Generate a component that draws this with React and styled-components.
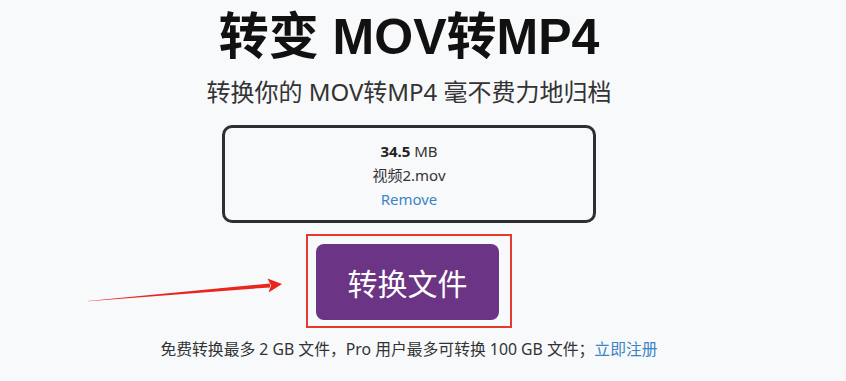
import React from "react";
import styled, { createGlobalStyle } from "styled-components";

const GlobalStyle = createGlobalStyle`
  html, body {
    margin: 0;
    padding: 0;
    background: #f8f9fb;
  }
  body {
    font-family: "Noto Sans", "Noto Sans CJK SC", sans-serif;
    color: #333;
  }
`;

const Page = styled.main`
  position: relative;
  width: 818px;
  height: 381px;
  display: flex;
  flex-direction: column;
  align-items: center;
  padding-top: 7px;
  box-sizing: border-box;
`;

const Title = styled.h1`
  margin: 0;
  font-family: "Liberation Sans", "Noto Sans CJK SC", sans-serif;
  font-size: 50px;
  line-height: 60px;
  font-weight: 700;
  color: #111;
`;

const SubTitle = styled.p`
  margin: 9px 0 0;
  font-size: 24px;
  line-height: 32px;
  color: #333;
`;

const FileCard = styled.div`
  margin-top: 17px;
  width: 374px;
  box-sizing: border-box;
  border: 3px solid #2e2f31;
  border-radius: 10px;
  padding: 11px 0 9px;
  display: flex;
  flex-direction: column;
  align-items: center;
  font-size: 15px;
  line-height: 24px;
  color: #333;
`;

const Size = styled.div`
  b {
    font-weight: 700;
    color: #222;
  }
`;

const Link = styled.a`
  color: #3a85c5;
  text-decoration: none;
  cursor: pointer;
`;

const Highlight = styled.div`
  margin-top: 11px;
  border: 2px solid #e53a2f;
  padding: 8px 11px 6px 8px;
`;

const ConvertButton = styled.button`
  width: 183px;
  height: 76px;
  border: none;
  border-radius: 8px;
  background: #6b3484;
  color: #fff;
  font-family: "Noto Sans CJK SC", sans-serif;
  font-size: 30px;
  display: flex;
  align-items: center;
  justify-content: center;
  cursor: pointer;
`;

const Note = styled.p`
  margin: 10px 0 0;
  font-size: 15.8px;
  line-height: 22px;
  color: #333;
`;

const Arrow = styled.svg`
  position: absolute;
  left: 80px;
  top: 270px;
  width: 210px;
  height: 40px;
`;

export default function App() {
  return (
    <>
      <GlobalStyle />
      <Page>
        <Title>转变 MOV转MP4</Title>
        <SubTitle>转换你的 MOV转MP4 毫不费力地归档</SubTitle>
        <FileCard>
          <Size>
            <b>34.5</b> MB
          </Size>
          <div>视频2.mov</div>
          <Link>Remove</Link>
        </FileCard>
        <Highlight>
          <ConvertButton>转换文件</ConvertButton>
        </Highlight>
        <Note>
          免费转换最多 2 GB 文件，Pro 用户最多可转换 100 GB 文件；<Link>立即注册</Link>
        </Note>
        <Arrow viewBox="0 0 210 40">
          <polygon points="8,30.9 190,13.4 190,17.4 8,31.3" fill="#e8261e" />
          <polygon points="202,14 187.4,8.5 191,15.3 188.6,22.5" fill="#e8261e" />
        </Arrow>
      </Page>
    </>
  );
}
